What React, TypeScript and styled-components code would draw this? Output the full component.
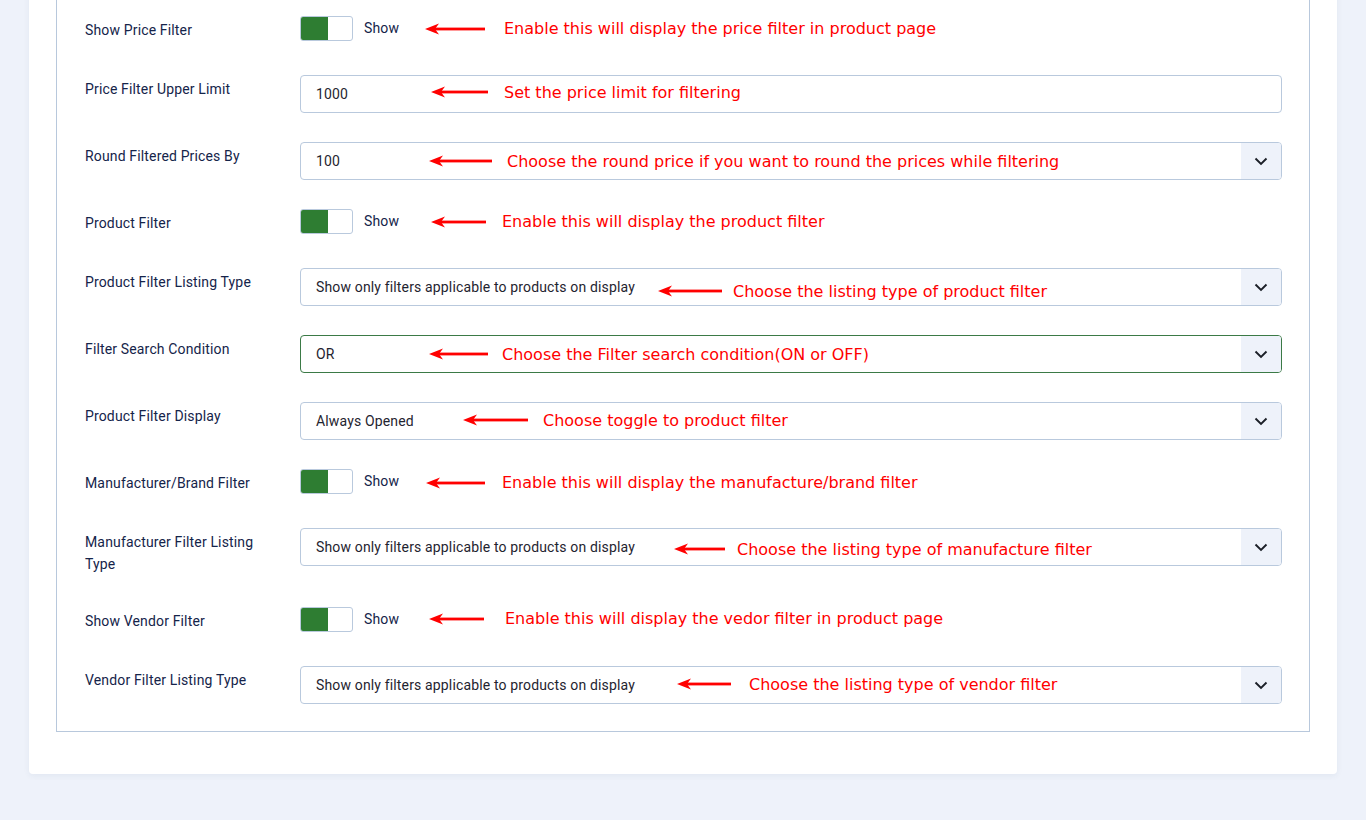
import React from 'react'
import styled, { createGlobalStyle } from 'styled-components'

type Note = { left: number; len: number; gap: number; dy: number; text: string }

type Field =
  | { kind: 'toggle'; label: string; note: Note }
  | { kind: 'input'; label: string; value: string; note: Note }
  | { kind: 'select'; label: string; value: string; focused?: boolean; note: Note }

const LISTING = 'Show only filters applicable to products on display'

const fields: Field[] = [
  { kind: 'toggle', label: 'Show Price Filter', note: { left: 125, len: 60, gap: 19, dy: 0, text: 'Enable this will display the price filter in product page' } },
  { kind: 'input', label: 'Price Filter Upper Limit', value: '1000', note: { left: 130, len: 57, gap: 16, dy: -2, text: 'Set the price limit for filtering' } },
  { kind: 'select', label: 'Round Filtered Prices By', value: '100', note: { left: 128, len: 63, gap: 15, dy: 0, text: 'Choose the round price if you want to round the prices while filtering' } },
  { kind: 'toggle', label: 'Product Filter', note: { left: 131, len: 55, gap: 16, dy: 0, text: 'Enable this will display the product filter' } },
  { kind: 'select', label: 'Product Filter Listing Type', value: LISTING, note: { left: 357, len: 64, gap: 11, dy: 4, text: 'Choose the listing type of product filter' } },
  { kind: 'select', label: 'Filter Search Condition', value: 'OR', focused: true, note: { left: 128, len: 59, gap: 14, dy: 0, text: 'Choose the Filter search condition(ON or OFF)' } },
  { kind: 'select', label: 'Product Filter Display', value: 'Always Opened', note: { left: 162, len: 65, gap: 15, dy: -1, text: 'Choose toggle to product filter' } },
  { kind: 'toggle', label: 'Manufacturer/Brand Filter', note: { left: 126, len: 59, gap: 17, dy: 1, text: 'Enable this will display the manufacture/brand filter' } },
  { kind: 'select', label: 'Manufacturer Filter Listing Type', value: LISTING, note: { left: 373, len: 51, gap: 12, dy: 2, text: 'Choose the listing type of manufacture filter' } },
  { kind: 'toggle', label: 'Show Vendor Filter', note: { left: 129, len: 55, gap: 21, dy: -1, text: 'Enable this will display the vedor filter in product page' } },
  { kind: 'select', label: 'Vendor Filter Listing Type', value: LISTING, note: { left: 376, len: 54, gap: 18, dy: -1, text: 'Choose the listing type of vendor filter' } },
]

/*---> Pieces <---*/
function Arrow({ len }: { len: number }) {
  return (
    <svg width={len} height={12} viewBox={`0 0 ${len} 12`}>
      <rect x={8} y={4.6} width={len - 8} height={2.8} fill="#ff0000" />
      <path d="M0 6 L14 0.5 L10 6 L14 11.5 Z" fill="#ff0000" />
    </svg>
  )
}

function Annotation({ note }: { note: Note }) {
  return (
    <NoteWrapper $left={note.left} $dy={note.dy} $gap={note.gap}>
      <Arrow len={note.len} />
      <NoteText>{note.text}</NoteText>
    </NoteWrapper>
  )
}

function Chevron() {
  return (
    <svg width="14" height="14" viewBox="0 0 14 14">
      <path d="M1.5 4.5 L7 10 L12.5 4.5" fill="none" stroke="#1b1f27" strokeWidth="1.9" />
    </svg>
  )
}

function Control({ field }: { field: Field }) {
  if (field.kind === 'toggle') {
    return (
      <ToggleLine>
        <Switch>
          <SwitchOn />
        </Switch>
        <SwitchText>Show</SwitchText>
        <Annotation note={field.note} />
      </ToggleLine>
    )
  }
  if (field.kind === 'input') {
    return (
      <Box>
        <BoxValue>{field.value}</BoxValue>
        <Annotation note={field.note} />
      </Box>
    )
  }
  return (
    <Box $focused={field.focused}>
      <BoxValue>{field.value}</BoxValue>
      <CaretCell>
        <Chevron />
      </CaretCell>
      <Annotation note={field.note} />
    </Box>
  )
}

/*---> Component <---*/
export default function App() {
  return (
    <>
      <GlobalStyle />
      <Page>
        <Card>
          <FieldSet>
            {fields.map((f) => (
              <Row key={f.label}>
                <Label>{f.label}</Label>
                <Control field={f} />
              </Row>
            ))}
          </FieldSet>
        </Card>
      </Page>
    </>
  )
}

/*---> Styles <---*/
const GlobalStyle = createGlobalStyle`
  html, body {
    margin: 0;
    padding: 0;
    background: #eef2fa;
    overflow: hidden;
  }
  body {
    font-family: Roboto, "Liberation Sans", sans-serif;
  }
`

const Page = styled.div`
  height: 820px;
  padding: 0 29px;
  box-sizing: border-box;
`

const Card = styled.div`
  margin-top: -40px;
  background: #ffffff;
  border-radius: 4px;
  box-shadow: 0 2px 6px rgba(40, 60, 110, 0.06);
  padding: 20px 27px 42px;
`

const FieldSet = styled.div`
  border: 1px solid #b8c8dc;
  padding: 35px 27px 27px 28px;
  display: flex;
  flex-direction: column;
  gap: 29px;
`

const Row = styled.div`
  display: grid;
  grid-template-columns: 215px 1fr;
  align-items: start;
`

const Label = styled.div`
  font-size: 14px;
  letter-spacing: 0.15px;
  line-height: 22px;
  color: #15244a;
  padding: 3px 30px 3px 0;
`

const Box = styled.div<{ $focused?: boolean }>`
  position: relative;
  height: 38px;
  box-sizing: border-box;
  border: 1px solid ${(p) => (p.$focused ? '#3b7a46' : '#b9c9dd')};
  border-radius: 4px;
  background: #ffffff;
  display: flex;
  align-items: stretch;
`

const BoxValue = styled.div`
  flex: 1;
  display: flex;
  align-items: center;
  padding: 0 15px;
  font-size: 14px;
  letter-spacing: 0.15px;
  color: #1f2430;
`

const CaretCell = styled.div`
  width: 40px;
  background: #eef2fa;
  border-radius: 0 3px 3px 0;
  display: flex;
  align-items: center;
  justify-content: center;
`

const ToggleLine = styled.div`
  position: relative;
  height: 25px;
  margin-bottom: 5px;
  display: flex;
  align-items: center;
  gap: 11px;
`

const Switch = styled.div`
  width: 53px;
  height: 25px;
  box-sizing: border-box;
  border: 1px solid #b9c9dd;
  border-radius: 3px;
  background: #ffffff;
  overflow: hidden;
  display: flex;
`

const SwitchOn = styled.div`
  width: 27px;
  background: #2e7d32;
`

const SwitchText = styled.span`
  font-size: 14px;
  letter-spacing: 0.15px;
  color: #15244a;
  margin-top: -2px;
`

const NoteWrapper = styled.div<{ $left: number; $dy: number; $gap: number }>`
  position: absolute;
  top: 0;
  bottom: 0;
  left: ${(p) => p.$left}px;
  transform: translateY(${(p) => p.$dy}px);
  display: flex;
  align-items: center;
  gap: ${(p) => p.$gap}px;
  pointer-events: none;
  white-space: nowrap;
`

const NoteText = styled.span`
  font-family: "DejaVu Sans", sans-serif;
  font-size: 16px;
  color: #ff0000;
`
